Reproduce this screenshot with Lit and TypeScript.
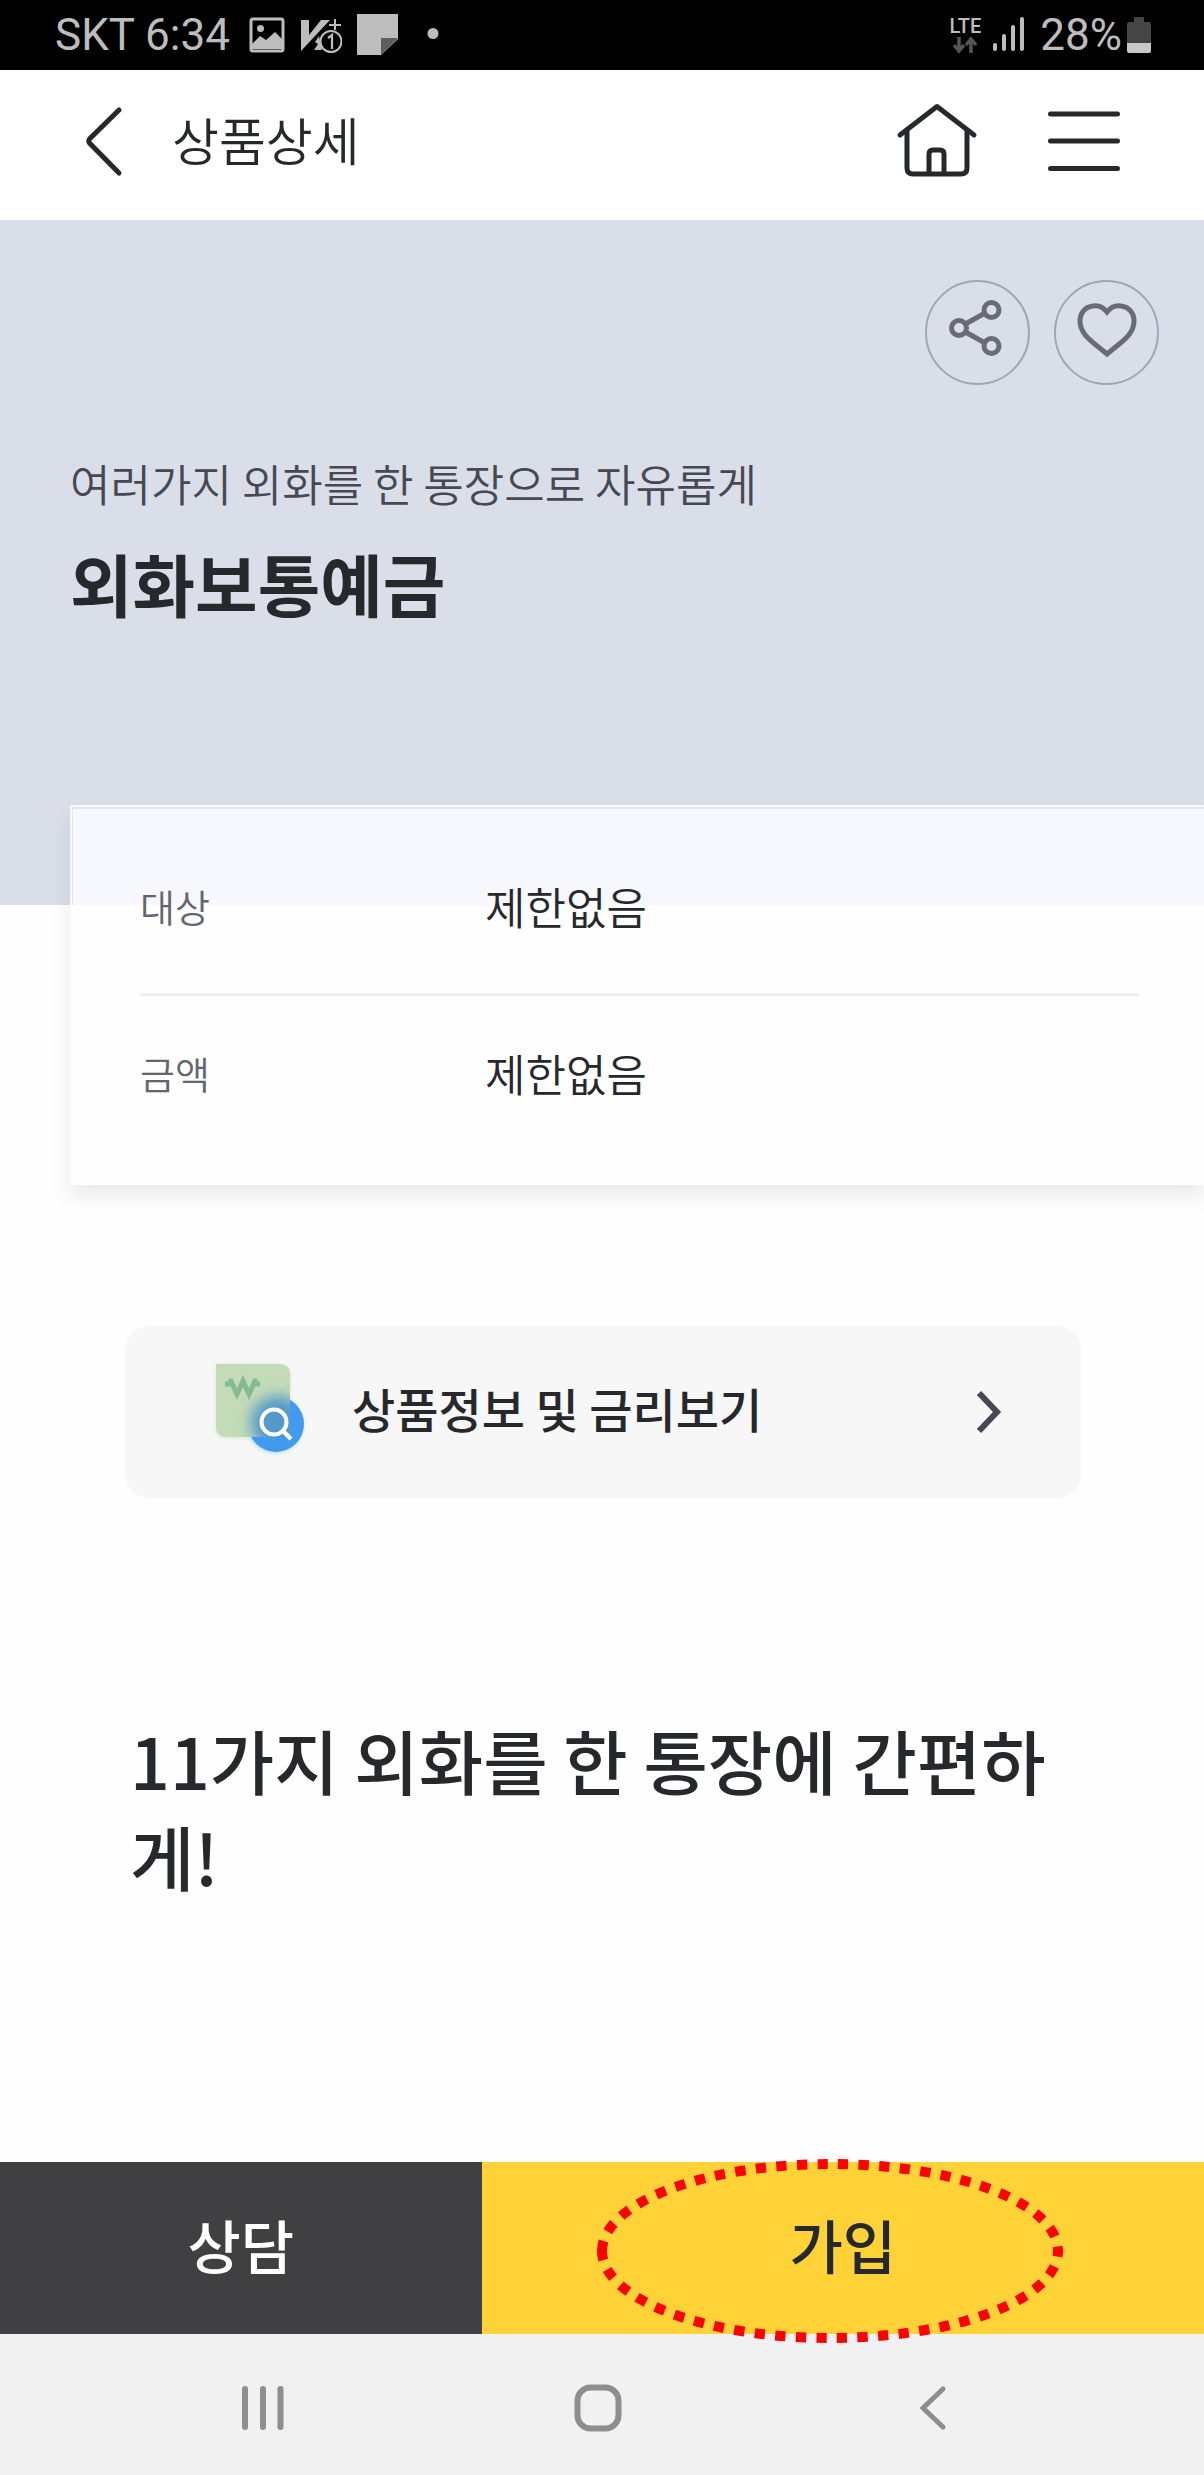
import { LitElement, html, css } from "lit";
import { customElement } from "lit/decorators.js";

const conditions = [
  { label: "대상", value: "제한없음" },
  { label: "금액", value: "제한없음" },
];

@customElement("status-bar")
class StatusBar extends LitElement {
  static styles = css`
    :host {
      display: flex;
      align-items: center;
      justify-content: space-between;
      height: 70px;
      padding: 0 53px 0 55px;
      background: #000;
      color: #bdbdbd;
      font-family: Roboto, sans-serif;
      font-size: 44px;
      line-height: 48px;
    }
    .group {
      display: flex;
      align-items: center;
    }
    .left {
      gap: 15px;
    }
    .right {
      gap: 5px;
    }
    .network {
      display: flex;
      flex-direction: column;
      align-items: center;
      font-size: 20px;
      line-height: 20px;
      font-weight: 500;
    }
    .signal {
      margin: 0 11px 0 7px;
    }
    svg {
      display: block;
      flex: none;
    }
  `;
  render() {
    return html`
      <div class="group left">
        <span>SKT 6:34</span>
        <svg width="40" height="44" viewBox="0 0 40 44" aria-hidden="true">
          <rect x="6" y="6" width="32" height="32" rx="2" fill="none" stroke="#bdbdbd" stroke-width="3" />
          <circle cx="15.500" cy="15.500" r="3.500" fill="#bdbdbd" />
          <path d="M7 31l8-8 6 4 9-8 8 8v9H7z" fill="#bdbdbd" />
        </svg>
        <svg width="42" height="44" viewBox="0 0 42 44" aria-hidden="true">
          <path d="M1 7h8v15L21 7h9L1 38z" fill="#bdbdbd" />
          <path d="M19 23l-4 6 3 2-4 6h8z" fill="#bdbdbd" />
          <path d="M35 6v11M29 12h12" stroke="#bdbdbd" stroke-width="2" />
          <circle cx="31" cy="28.500" r="10.500" fill="#000" stroke="#bdbdbd" stroke-width="2" />
          <path d="M28 25l4-3v14" fill="none" stroke="#bdbdbd" stroke-width="2.200" />
        </svg>
        <svg width="41" height="44" viewBox="0 0 41 44" aria-hidden="true">
          <path d="M0 1h41v25L24 42H0z" fill="#bdbdbd" />
          <path d="M24 25h17L24 42z" fill="#5e5e5e" />
        </svg>
        <svg width="44" height="44" viewBox="0 0 44 44" aria-hidden="true">
          <circle cx="20" cy="20.500" r="5.500" fill="#bdbdbd" />
        </svg>
      </div>
      <div class="group right">
        <div class="network">
          <span>LTE</span>
          <svg width="26" height="18" viewBox="0 0 26 18" aria-hidden="true">
            <path d="M7 1v13M2 9l5 6 5-6M19 17V4M14 9l5-6 5 6" fill="none" stroke="#555" stroke-width="3.500" />
          </svg>
        </div>
        <svg class="signal" width="31" height="40" viewBox="0 0 31 40" aria-hidden="true">
          <path d="M2 30v4M11 21v13M20 12v22M29 4v30" stroke="#bdbdbd" stroke-width="4" stroke-linecap="round" />
        </svg>
        <span>28%</span>
        <svg width="24" height="38" viewBox="0 0 24 38" aria-hidden="true">
          <path d="M7 1h10v5h5q2 0 2 2v19H0V8q0-2 2-2h5z" fill="#454545" />
          <path d="M0 27h24v8q0 2-2 2H2q-2 0-2-2z" fill="#c8c8c8" />
        </svg>
      </div>
    `;
  }
}

@customElement("app-root")
class AppRoot extends LitElement {
  static styles = css`
    :host {
      display: flex;
      flex-direction: column;
      min-height: 100vh;
      background: #fefefe;
      color: #26282c;
      font-family: "Noto Sans CJK KR", sans-serif;
    }
    * {
      box-sizing: border-box;
    }
    h1,
    h2,
    p,
    dl,
    dd,
    dt {
      margin: 0;
    }
    button {
      padding: 0;
      border: 0;
      background: none;
      color: inherit;
      font: inherit;
      cursor: pointer;
    }
    svg {
      display: block;
      flex: none;
    }
    .header {
      display: flex;
      align-items: center;
      height: 150px;
      padding: 0 80px 8px;
      background: #fff;
    }
    .title {
      flex: 1;
      margin-left: 44px;
      padding-bottom: 4px;
      font-size: 51px;
      line-height: 72px;
      font-weight: 350;
    }
    .tools {
      display: flex;
      gap: 64px;
    }
    .hero {
      display: flex;
      flex-direction: column;
      height: 685px;
      padding: 60px 45px 0 70px;
      background: #dadee9;
    }
    .actions {
      display: flex;
      justify-content: flex-end;
      gap: 24px;
      margin-bottom: 66px;
    }
    .round {
      display: grid;
      place-items: center;
      width: 105px;
      height: 105px;
      border: 2px solid #9ba8b7;
      border-radius: 50%;
    }
    .summary {
      font-size: 44px;
      line-height: 64px;
      font-weight: 350;
      color: #464952;
    }
    .name {
      margin-top: 20px;
      font-size: 68px;
      line-height: 96px;
      font-weight: 700;
    }
    .card {
      position: relative;
      height: 380px;
      margin: -100px 0 0 70px;
      padding: 24px 65px 0 70px;
      background:
        linear-gradient(#e2e5f0, #e2e5f0) 2px 2px / 100% 2px no-repeat,
        linear-gradient(#e2e5f0, #e2e5f0) 2px 2px / 1px 98px no-repeat,
        linear-gradient(#f6f8fd 100px, #fefefe 100px);
      box-shadow: 0 12px 20px rgba(0, 0, 0, 0.08);
    }
    .row {
      display: flex;
      align-items: center;
      padding: 45px 0 55px;
    }
    .row + .row {
      border-top: 3px solid #eee;
    }
    dt {
      width: 345px;
      font-size: 38px;
      line-height: 64px;
      font-weight: 350;
      color: #63666e;
    }
    dd {
      font-size: 44px;
      line-height: 64px;
      font-weight: 350;
    }
    .info {
      display: flex;
      align-items: center;
      height: 172px;
      margin: 141px 123px 0 125px;
      padding: 0 75px 0 85px;
      border-radius: 24px;
      background: #f7f7f7;
      font-size: 47px;
      line-height: 68px;
      font-weight: 500;
      text-align: left;
    }
    .info span {
      flex: 1;
      margin-left: 42px;
      padding-bottom: 8px;
    }
    .headline {
      flex: 1;
      margin: 214px 130px 0;
      font-size: 70px;
      line-height: 96px;
      font-weight: 500;
    }
    .footer {
      display: grid;
      grid-template-columns: 2fr 3fr;
      height: 172px;
      font-size: 58px;
      line-height: 84px;
      font-weight: 500;
    }
    .footer button {
      padding-bottom: 8px;
    }
    .consult {
      background: #404042;
      color: #fff;
    }
    .join {
      position: relative;
      background: #ffd338;
    }
    .mark {
      position: absolute;
      top: -3px;
      left: calc(50% - 246px);
    }
    .system {
      display: grid;
      grid-template-columns: 28% 28% 28%;
      justify-content: center;
      height: 141px;
      padding: 6px 8px 0 0;
      background: #f1f1f1;
    }
    .system button {
      display: grid;
      place-items: center;
    }
  `;

  render() {
    return html`
      <status-bar></status-bar>
      <header class="header">
        <button aria-label="뒤로">
          <svg width="48" height="76" viewBox="0 0 48 76">
            <path d="M39 7L9.500 36Q8 38 9.500 40L39 70" fill="none" stroke="#26282c" stroke-width="5" stroke-linecap="round" />
          </svg>
        </button>
        <h1 class="title">상품상세</h1>
        <div class="tools">
          <button aria-label="홈">
            <svg width="88" height="80" viewBox="0 0 88 80">
              <g fill="none" stroke="#26282c" stroke-width="5" stroke-linecap="round" stroke-linejoin="round">
                <path d="M8 34L45 5.500L82 34" />
                <path d="M15 30v37q0 6 6 6h48q6 0 6-6V30" />
                <path d="M37 72V53q0-4 4-4h7q4 0 4 4v19" />
              </g>
            </svg>
          </button>
          <button aria-label="메뉴">
            <svg width="80" height="80" viewBox="0 0 80 80">
              <path d="M6.500 13h67M6.500 40h67M6.500 67.500h67" stroke="#26282c" stroke-width="5" stroke-linecap="round" />
            </svg>
          </button>
        </div>
      </header>
      <main>
        <section class="hero">
          <div class="actions">
            <button class="round" aria-label="공유">
              <svg width="60" height="68" viewBox="0 0 60 68">
                <g fill="none" stroke="#696c76" stroke-width="5">
                  <circle cx="11" cy="29" r="7.500" />
                  <circle cx="43.500" cy="11" r="7.500" />
                  <circle cx="43.500" cy="47" r="7.500" />
                  <path d="M17.500 25l19.500-11M17.500 33l19.500 11" />
                </g>
              </svg>
            </button>
            <button class="round" aria-label="찜하기">
              <svg width="60" height="60" viewBox="0 0 60 60">
                <path d="M30 9C26 4 21 2 16 3C8 4 3 10 3 18C3 32 16 39 30 51C44 39 57 32 57 18C57 10 52 4 44 3C39 2 34 4 30 9z" fill="none" stroke="#696c76" stroke-width="5" />
              </svg>
            </button>
          </div>
          <p class="summary">여러가지 외화를 한 통장으로 자유롭게</p>
          <h2 class="name">외화보통예금</h2>
        </section>
        <dl class="card">
          ${conditions.map(
            (c) => html`<div class="row"><dt>${c.label}</dt><dd>${c.value}</dd></div>`
          )}
        </dl>
      </main>
      <button class="info">
        <svg width="100" height="100" viewBox="0 0 100 100" aria-hidden="true">
          <defs>
            <clipPath id="sheet"><path d="M6 2h63q11 0 11 11v62H17q-11 0-11-11z" /></clipPath>
            <filter id="soft" x="-50%" y="-50%" width="200%" height="200%"><feGaussianBlur stdDeviation="7" /></filter>
            <filter id="edge" x="-50%" y="-50%" width="200%" height="200%"><feGaussianBlur stdDeviation="2" /></filter>
          </defs>
          <path d="M6 3h63q11 0 11 11v62H17q-11 0-11-11z" fill="#c9e2c0" filter="url(#edge)" opacity="0.700" />
          <circle cx="65" cy="63" r="28" fill="#a3dff5" filter="url(#edge)" />
          <circle cx="66" cy="62" r="28" fill="#4299ee" />
          <path d="M6 2h63q11 0 11 11v62H17q-11 0-11-11z" fill="#c3dbb6" />
          <g clip-path="url(#sheet)">
            <circle cx="68" cy="61" r="27" fill="#5399cb" filter="url(#soft)" />
          </g>
          <path d="M15 22h8M42 22h8M20 17l7 15 6-13 6 13 7-15" fill="none" stroke="#86ba94" stroke-width="5" />
          <circle cx="64" cy="60" r="12.500" fill="none" stroke="#fff" stroke-width="4" />
          <path d="M73 69l8 8" stroke="#fff" stroke-width="4.500" />
        </svg>
        <span>상품정보 및 금리보기</span>
        <svg width="32" height="48" viewBox="0 0 32 48" aria-hidden="true">
          <path d="M5 5l18 19L5 43" fill="none" stroke="#464952" stroke-width="6" />
        </svg>
      </button>
      <h2 class="headline">11가지 외화를 한 통장에 간편하게!</h2>
      <footer class="footer">
        <button class="consult">상담</button>
        <button class="join">
          가입
          <svg class="mark" width="466" height="184" viewBox="0 0 466 184" aria-hidden="true">
            <path d="M5 92A228 87 0 0 1 461 92A228 87 0 0 1 5 92" fill="none" stroke="#f00" stroke-width="10" stroke-dasharray="10.300 10.300" />
          </svg>
        </button>
      </footer>
      <nav class="system">
        <button aria-label="최근 앱">
          <svg width="48" height="48" viewBox="0 0 48 48">
            <path d="M6 5v38M24 5v38M41.500 5v38" stroke="#8e8e8e" stroke-width="6" stroke-linecap="round" />
          </svg>
        </button>
        <button aria-label="홈 화면">
          <svg width="48" height="48" viewBox="0 0 48 48">
            <rect x="3.500" y="3.500" width="41" height="41" rx="13" fill="none" stroke="#8e8e8e" stroke-width="6" />
          </svg>
        </button>
        <button aria-label="이전">
          <svg width="48" height="48" viewBox="0 0 48 48">
            <path d="M34 5L14 24l20 19" fill="none" stroke="#8e8e8e" stroke-width="5" stroke-linecap="round" />
          </svg>
        </button>
      </nav>
    `;
  }
}
